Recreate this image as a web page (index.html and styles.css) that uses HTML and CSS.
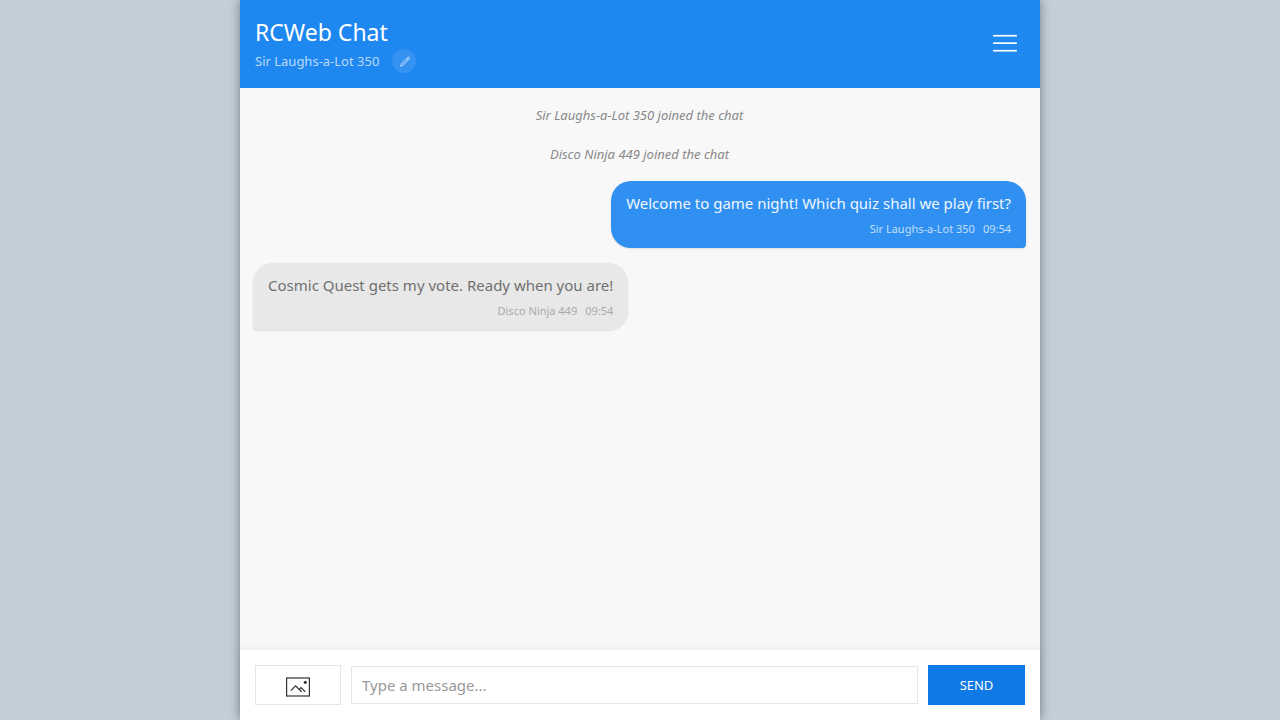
FILE: index.html
```html
<!DOCTYPE html>
<html lang="en">
<head>
  <meta charset="UTF-8">
  <meta name="viewport" content="width=device-width, initial-scale=1">
  <title>RCWeb Chat</title>
  <link rel="stylesheet" href="styles.css">
</head>
<body>
  <div class="chat-container">
    <header class="chat-header">
      <div class="header-info">
        <h1 class="chat-title">RCWeb Chat</h1>
        <div class="user-row">
          <span class="user-name">Sir Laughs-a-Lot 350</span>
          <button type="button" class="edit-name" aria-label="Edit name">
            <svg width="13" height="13" viewBox="0 0 20 20">
              <path fill="none" stroke="currentColor" stroke-width="1.6" d="M17.25,6.01 L7.12,16.1 L3.82,17.2 L5.02,13.9 L15.12,3.88 C15.71,3.29 16.66,3.29 17.25,3.88 C17.83,4.47 17.83,5.42 17.25,6.01 L17.25,6.01 Z"></path>
              <path fill="none" stroke="currentColor" stroke-width="1.6" d="M15.98,7.268 L13.851,5.148"></path>
            </svg>
          </button>
        </div>
      </div>
      <button type="button" class="menu-toggle" aria-label="Menu">
        <svg width="28" height="28" viewBox="0 0 20 20">
          <rect x="1.5" y="3.5" width="17" height="1.2" fill="currentColor"></rect>
          <rect x="1.5" y="8.8" width="17" height="1.2" fill="currentColor"></rect>
          <rect x="1.5" y="14.2" width="17" height="1.2" fill="currentColor"></rect>
        </svg>
      </button>
    </header>

    <main class="chat-messages">
      <p class="system-message">Sir Laughs-a-Lot 350 joined the chat</p>
      <p class="system-message">Disco Ninja 449 joined the chat</p>

      <div class="message sent">
        <div class="message-text">Welcome to game night! Which quiz shall we play first?</div>
        <div class="message-meta"><span>Sir Laughs-a-Lot 350</span><span>09:54</span></div>
      </div>

      <div class="message received">
        <div class="message-text">Cosmic Quest gets my vote. Ready when you are!</div>
        <div class="message-meta"><span>Disco Ninja 449</span><span>09:54</span></div>
      </div>
    </main>

    <form class="chat-input">
      <button type="button" class="image-button" aria-label="Send image">
        <svg width="24" height="24" viewBox="0 0 20 20">
          <circle cx="16.1" cy="6.1" r="1.3" fill="currentColor"></circle>
          <rect x="0.5" y="2.5" width="19" height="15" fill="none" stroke="currentColor"></rect>
          <polyline fill="none" stroke="currentColor" stroke-width="1.01" points="4,13 8,9 13,14"></polyline>
          <polyline fill="none" stroke="currentColor" stroke-width="1.01" points="11,12 12.5,10.5 16,14"></polyline>
        </svg>
      </button>
      <input type="text" class="message-input" placeholder="Type a message..." aria-label="Message">
      <button type="submit" class="send-button">Send</button>
    </form>
  </div>
</body>
</html>
```

FILE: styles.css
```css
* {
  box-sizing: border-box;
}

body {
  margin: 0;
  background: #c2cfd8;
  color: #666;
  font-family: "Segoe UI", "Noto Sans", sans-serif;
  font-size: 15px;
  line-height: 24px;
}

button,
input {
  font: inherit;
  border-radius: 0;
}

button {
  padding: 0;
  cursor: pointer;
}

svg {
  display: block;
}

.chat-container {
  display: flex;
  flex-direction: column;
  max-width: 800px;
  height: 100vh;
  margin: 0 auto;
  background: #f8f8f8;
  box-shadow: 0 0 10px rgba(0, 0, 0, 0.4);
}

/* header */
.chat-header {
  display: flex;
  align-items: center;
  justify-content: space-between;
  padding: 15px;
  background: #1e87f0;
  color: #fff;
}

.chat-title {
  margin: 0;
  font-size: 23px;
  font-weight: 400;
  line-height: 34px;
}

.user-row {
  display: flex;
  align-items: center;
  gap: 13px;
}

.user-name {
  font-size: 13px;
  color: rgba(255, 255, 255, 0.7);
}

.edit-name {
  display: flex;
  align-items: center;
  justify-content: center;
  width: 24px;
  height: 24px;
  border: none;
  border-radius: 50%;
  background: rgba(255, 255, 255, 0.1);
  color: rgba(255, 255, 255, 0.5);
}

.menu-toggle {
  padding: 0 6px;
  border: none;
  background: none;
  color: #fff;
}

/* messages */
.chat-messages {
  flex: 1;
  display: flex;
  flex-direction: column;
  gap: 15px;
  padding: 15px 14px 15px 13px;
  overflow-y: auto;
}

.system-message {
  margin: 0;
  color: #888;
  font-size: 13px;
  font-style: italic;
  text-align: center;
}

.message {
  max-width: 80%;
  padding: 10px 15px;
  border-radius: 20px;
  box-shadow: 0 1px 2px rgba(0, 0, 0, 0.1);
}

.sent {
  align-self: flex-end;
  background: #3090f1;
  color: #f0f7fe;
  border-bottom-right-radius: 4px;
}

.received {
  align-self: flex-start;
  background: #e8e8e8;
  color: #707070;
  border-bottom-left-radius: 4px;
}

.message-meta {
  display: flex;
  justify-content: flex-end;
  gap: 8px;
  margin-top: 5px;
  font-size: 11px;
  line-height: 18px;
}

.sent .message-meta {
  color: #c4dffa;
}

.received .message-meta {
  color: #aaa;
}

/* input bar */
.chat-input {
  display: flex;
  align-items: center;
  gap: 10px;
  padding: 15px;
  background: #fff;
  box-shadow: 0 -2px 10px rgba(0, 0, 0, 0.05);
}

.image-button {
  display: flex;
  align-items: center;
  justify-content: center;
  width: 86px;
  height: 40px;
  padding-top: 4px;
  border: 1px solid #e5e5e5;
  background: transparent;
  color: #333;
}

.message-input {
  flex: 1;
  min-width: 0;
  height: 38px;
  padding: 0 10px;
  border: 1px solid #e5e5e5;
  background: #fff;
  color: #666;
}

.message-input::placeholder {
  color: #999;
}

.send-button {
  min-width: 97px;
  height: 40px;
  padding: 0 30px;
  border: none;
  background: #0f7ae5;
  color: #fff;
  font-size: 13px;
  text-transform: uppercase;
}
```
